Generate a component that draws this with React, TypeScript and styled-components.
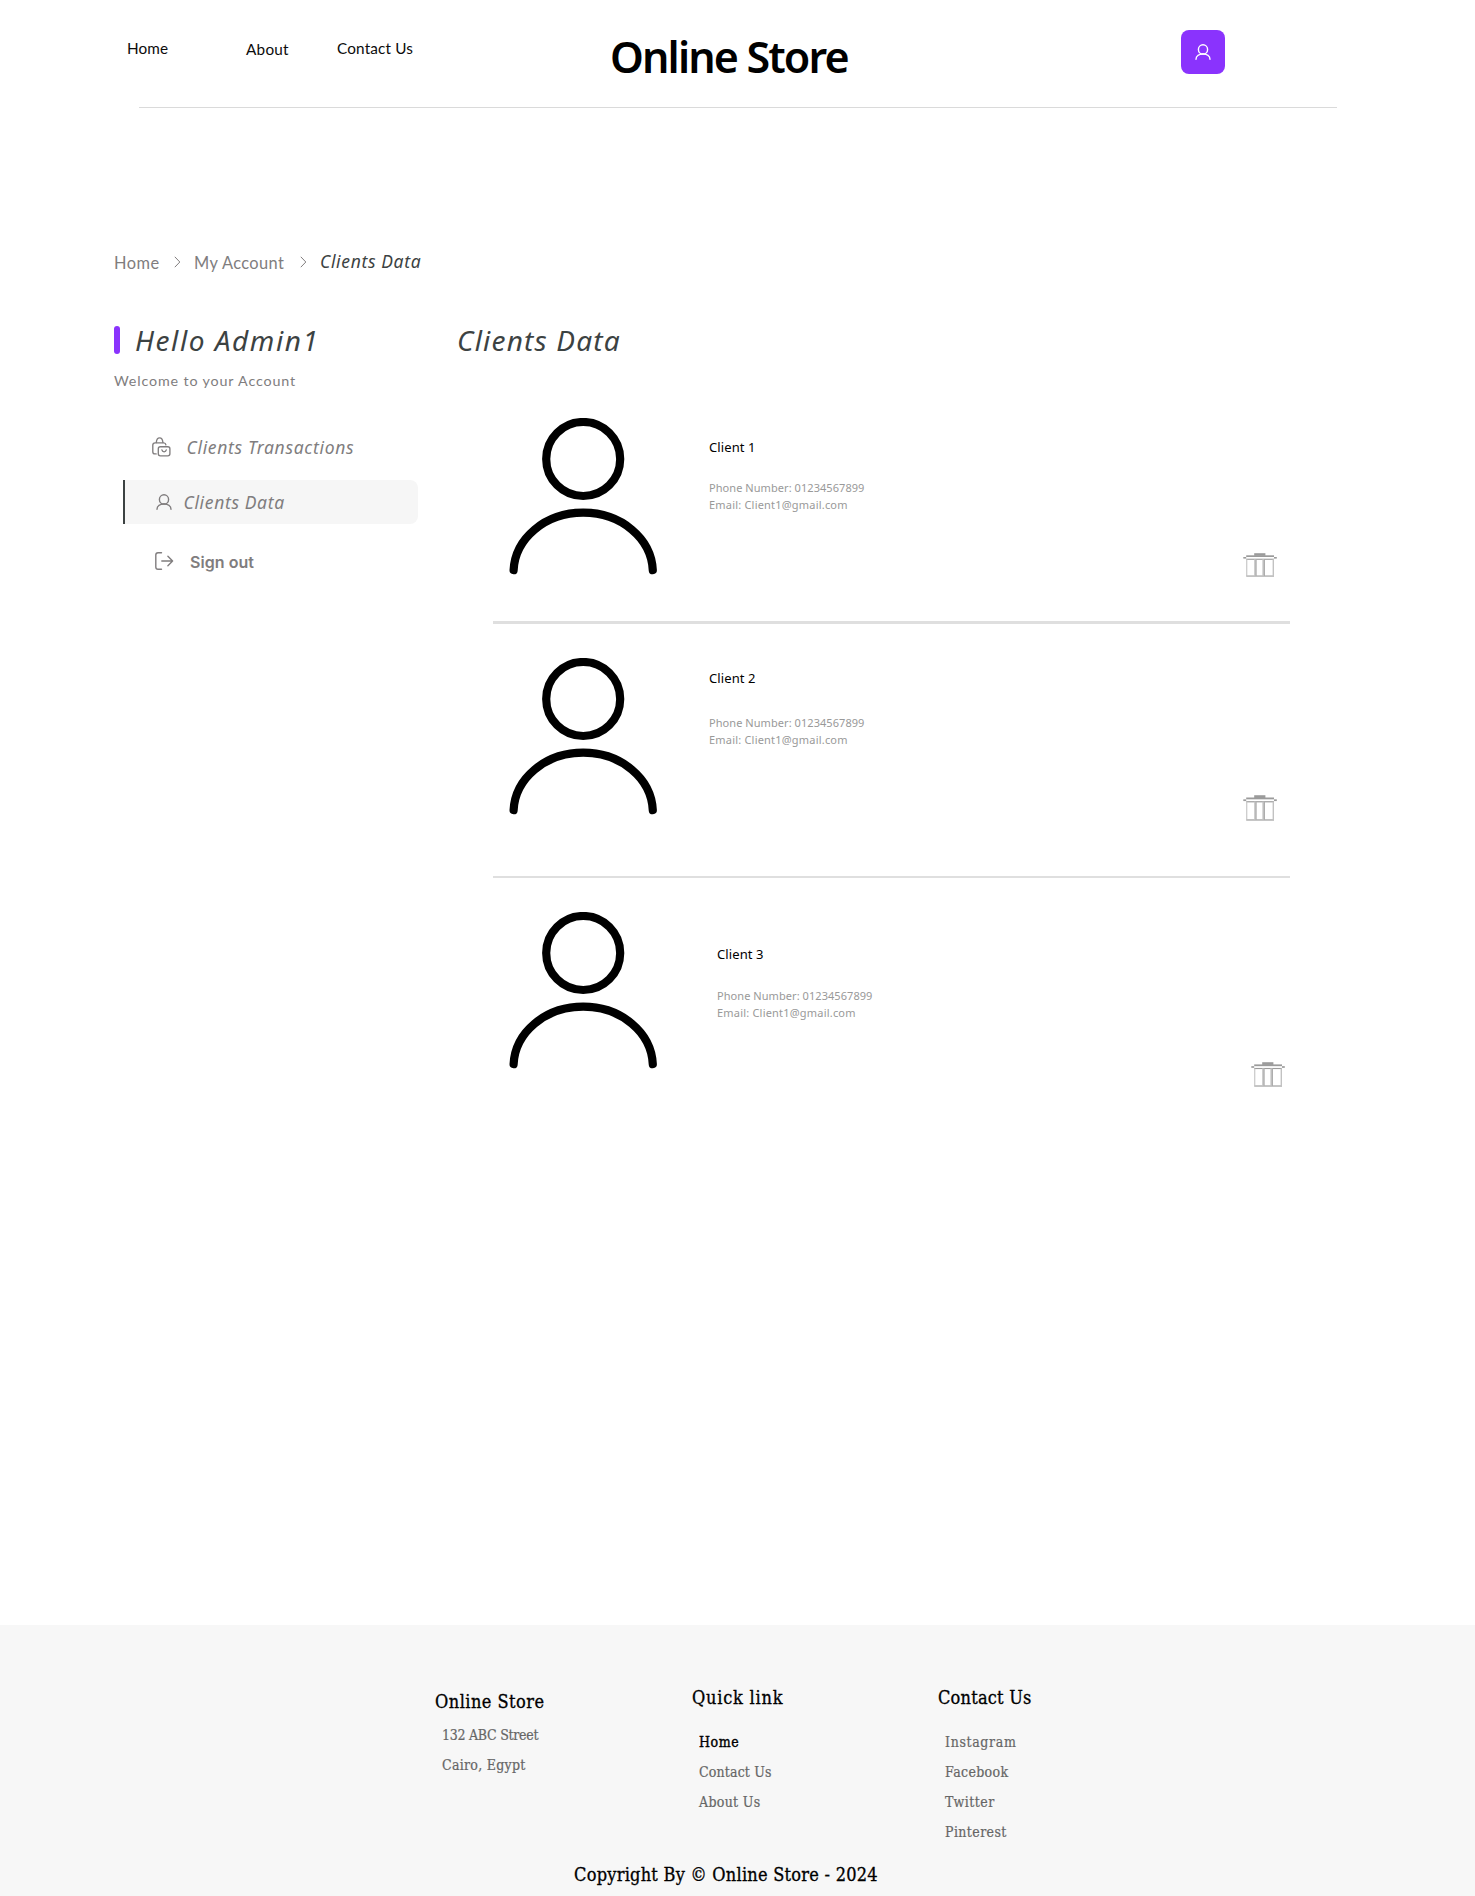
import React from "react";
import styled, { createGlobalStyle } from "styled-components";

const humanist = `"Noto Sans", "Open Sans", sans-serif`;
const lato = `Lato, "Open Sans", sans-serif`;
const serif = `"DejaVu Serif Condensed", "DejaVu Serif", serif`;

const GlobalStyle = createGlobalStyle`
  * { box-sizing: border-box; }
  body { margin: 0; background: #fff; }
  h1, h2, h3, p, ul { margin: 0; padding: 0; font-weight: 400; }
  ul { list-style: none; }
  a { color: inherit; text-decoration: none; }
  svg { display: block; flex: none; }
`;

type Track = { $track?: number };

const Page = styled.div`
  width: 1475px;
  height: 1896px;
  display: flex;
  flex-direction: column;
  overflow: hidden;
`;

/* ---------- header ---------- */

const Header = styled.header`
  flex: none;
  height: 107px;
  display: grid;
  grid-template-columns: 119px 91px 273px 571px 44px;
  align-items: start;
  padding-left: 127px;
`;

const NavLink = styled.a<Track & { $top: number }>`
  margin-top: ${(p) => p.$top}px;
  font: 400 15.3px/20px ${lato};
  letter-spacing: ${(p) => p.$track ?? 0}px;
  color: #0c0c0c;
`;

const Logo = styled.h1`
  margin-top: 27px;
  font: 600 43px/60px ${humanist};
  letter-spacing: -1.85px;
  white-space: nowrap;
  color: #000;
`;

const ProfileButton = styled.button`
  width: 44px;
  height: 44px;
  margin-top: 30px;
  padding: 0;
  border: 0;
  border-radius: 8px;
  background: #8a33fd;
  color: #fff;
  display: flex;
  align-items: center;
  justify-content: center;
`;

const HeaderRule = styled.hr`
  flex: none;
  width: 1198px;
  height: 1px;
  margin: 0 0 0 139px;
  border: 0;
  background: #dadada;
`;

/* ---------- main ---------- */

const Main = styled.main`
  flex: none;
  height: 1517px;
  padding: 141px 0 0 114px;
`;

const Breadcrumbs = styled.nav`
  display: grid;
  grid-template-columns: 60px 20px 106px 20px auto;
  height: 24px;
  color: #807d7e;
`;

const Crumb = styled.a<Track>`
  padding-top: 2px;
  font: 400 16.4px/24px ${lato};
  letter-spacing: ${(p) => p.$track ?? 0}px;
`;

const CurrentCrumb = styled.span`
  font: italic 400 17.5px/24px ${humanist};
  letter-spacing: 0.65px;
  color: #3c4242;
`;

const CrumbArrow = styled.svg`
  width: 7px;
  height: 12px;
  margin-top: 7px;
`;

const Columns = styled.div`
  display: grid;
  grid-template-columns: 343px 1fr;
  margin-top: 53px;
`;

const Greeting = styled.div`
  display: flex;
  gap: 15px;
  height: 28px;
`;

const Accent = styled.span`
  width: 6px;
  height: 28px;
  border-radius: 3px;
  background: #8a33fd;
`;

const Title = styled.h2<Track>`
  height: 28px;
  font: italic 400 28px/29px ${humanist};
  letter-spacing: ${(p) => p.$track ?? 0}px;
  white-space: nowrap;
  color: #3c4242;
`;

const Welcome = styled.p`
  margin-top: 17px;
  font: 400 14.3px/20px ${lato};
  letter-spacing: 0.85px;
  color: #807d7e;
`;

const Menu = styled.ul`
  display: flex;
  flex-direction: column;
  margin: 34px 0 0 9px;
`;

const MenuItem = styled.li<{ $active?: boolean; $indent: number; $gap: number; $space?: number }>`
  display: flex;
  align-items: center;
  width: 295px;
  height: 44px;
  margin-top: ${(p) => p.$space ?? 0}px;
  padding-left: ${(p) => p.$indent}px;
  gap: ${(p) => p.$gap}px;
  border-left: 2px solid ${(p) => (p.$active ? "#3c4242" : "transparent")};
  border-radius: 0 8px 8px 0;
  background: ${(p) => (p.$active ? "#f6f6f6" : "transparent")};
  color: #807d7e;
`;

const MenuLabel = styled.a<Track & { $strong?: boolean }>`
  padding-top: ${(p) => (p.$strong ? 2 : 0)}px;
  font: ${(p) => (p.$strong ? `600 16px/22px Inter, sans-serif` : `italic 400 17.5px/24px ${humanist}`)};
  letter-spacing: ${(p) => p.$track ?? 0}px;
`;

/* ---------- client list ---------- */

const ClientList = styled.ul`
  display: flex;
  flex-direction: column;
  width: 797px;
  margin: 46px 0 0 36px;
`;

const ClientRow = styled.li<{ $height: number; $rule: number }>`
  display: grid;
  grid-template-columns: 216px 1fr auto;
  align-items: start;
  height: ${(p) => p.$height}px;
  border-bottom: ${(p) => p.$rule}px solid #dfdfdf;
`;

const Avatar = styled.svg<{ $top: number }>`
  width: 148px;
  height: 157px;
  margin: ${(p) => p.$top}px 0 0 16px;
`;

const ClientInfo = styled.div<{ $top: number; $indent: number }>`
  padding: ${(p) => p.$top}px 0 0 ${(p) => p.$indent}px;
`;

const ClientName = styled.h3`
  font: 400 13px/18px ${humanist};
  letter-spacing: 0.1px;
  color: #000;
`;

const ClientDetails = styled.div<{ $gap: number }>`
  margin-top: ${(p) => p.$gap}px;
  font: 400 11px/17px ${humanist};
  color: #999;
`;

const Detail = styled.p<Track>`
  letter-spacing: ${(p) => p.$track ?? 0}px;
`;

const DeleteButton = styled.button<{ $top: number; $right: number }>`
  padding: 0;
  border: 0;
  background: none;
  margin: ${(p) => p.$top}px ${(p) => p.$right}px 0 0;
`;

/* ---------- footer ---------- */

const Footer = styled.footer`
  flex: none;
  height: 271px;
  padding-top: 61px;
  background: #f7f7f7;
  font-family: ${serif};
`;

const FooterColumns = styled.div`
  display: grid;
  grid-template-columns: 257px 246px auto;
  height: 161px;
  padding-left: 435px;
`;

const FooterColumn = styled.section<{ $top?: number }>`
  padding-top: ${(p) => p.$top ?? 0}px;
`;

const FooterTitle = styled.h3<Track>`
  font: 400 18px/24px ${serif};
  letter-spacing: ${(p) => p.$track ?? 0}px;
  -webkit-text-stroke: 0.3px currentColor;
  color: #000;
`;

const FooterList = styled.ul<{ $gap: number }>`
  margin: ${(p) => p.$gap}px 0 0 7px;
`;

const FooterItem = styled.li<Track & { $current?: boolean }>`
  font: 400 14px/30px ${serif};
  letter-spacing: ${(p) => p.$track ?? 0}px;
  -webkit-text-stroke: ${(p) => (p.$current ? 0.35 : 0.2)}px currentColor;
  color: ${(p) => (p.$current ? "#000" : "#666")};
`;

const Copyright = styled.p`
  margin: 16px 0 0 574px;
  font: 400 18px/24px ${serif};
  letter-spacing: 0.25px;
  -webkit-text-stroke: 0.3px currentColor;
  color: #000;
`;

/* ---------- icons ---------- */

const UserIcon = () => (
  <svg width="16" height="16" viewBox="0 0 16 16" fill="none" stroke="currentColor" strokeWidth="1.4" strokeLinecap="round">
    <circle cx="8" cy="5.4" r="4.6" />
    <path d="M1 15.2C1 12 4.1 10 8 10s7 2 7 5.2" />
  </svg>
);

const BagIcon = () => (
  <svg width="19" height="20" viewBox="0 0 19 20" fill="none" stroke="currentColor" strokeWidth="1.35" strokeLinecap="round" strokeLinejoin="round">
    <path d="M4.2 16.9H3C1.5 16.9 .8 16 .8 14.7V8.1C.8 6.7 1.7 5.8 3.1 5.8h8.6c1.4 0 2 .7 2.2 2" />
    <path d="M4.3 5.5C4.5 3 5.6.8 7.6.8s3.1 2.2 3.3 4.7" />
    <rect x="6.3" y="9.7" width="11.6" height="9.2" rx="2.1" />
    <path d="M9.9 12.9c.3 1.3 1.1 1.9 2.2 1.9s1.9-.6 2.2-1.9" />
  </svg>
);

const SignOutIcon = () => (
  <svg width="19" height="18" viewBox="0 0 19 18" fill="none" stroke="currentColor" strokeWidth="1.4" strokeLinecap="round" strokeLinejoin="round">
    <path d="M6.5.8H3C1.6.8.8 1.6.8 3v12c0 1.4.8 2.2 2.2 2.2h3.5M6.8 9h10.8M12.9 4.3 17.6 9l-4.7 4.7" />
  </svg>
);

const Chevron = () => (
  <CrumbArrow viewBox="0 0 7 12" fill="none" stroke="#807d7e" strokeWidth="1">
    <path d="M.8.8 5.8 6 .8 11.2" />
  </CrumbArrow>
);

const ClientAvatar = ({ top }: { top: number }) => (
  <Avatar $top={top} viewBox="0 0 148 157" fill="none" stroke="#000" strokeWidth="8.2" strokeLinecap="round">
    <circle cx="74.2" cy="41" r="37" />
    <path d="M4.6 152.2C6.1 120.5 36 94.7 74.2 94.7s68.1 25.8 69.6 57.5" />
  </Avatar>
);

const TrashIcon = ({ height }: { height: number }) => (
  <svg width="34" height={height} viewBox="0 0 34 24" preserveAspectRatio="none">
    <g fill="#9b9b9b">
      <rect x="11.2" y=".2" width="11.2" height="2.6" />
      <rect x="3.2" y="2.3" width="27.8" height="1.7" />
      <rect x=".3" y="4" width="2.9" height="1.6" />
      <rect x="31" y="4" width="2.8" height="1.6" />
      <rect x="3.2" y="5.7" width="27.8" height="1.1" />
      <rect x="3.2" y="22.5" width="27.8" height="1.1" />
    </g>
    <g fill="#c2c2c2">
      <rect x="3.2" y="6" width="1.1" height="17" />
      <rect x="11.2" y="6" width="2.3" height="17" />
      <rect x="19.4" y="6" width="2.5" height="17" />
      <rect x="29.6" y="6" width="1.4" height="17" />
    </g>
    <g fill="#a2a2a2">
      <rect x="12.7" y="6" width=".7" height="17" />
      <rect x="20.9" y="6" width=".8" height="17" />
    </g>
  </svg>
);

/* ---------- data ---------- */

const clients = [
  { name: "Client 1", height: 224, rule: 3, avatar: 18, info: 38, indent: 0, gap: 23, trash: 153, trashH: 24, right: 13 },
  { name: "Client 2", height: 254, rule: 2, avatar: 34, info: 45, indent: 0, gap: 27, trash: 171, trashH: 26, right: 13 },
  { name: "Client 3", height: 222, rule: 0, avatar: 34, info: 67, indent: 8, gap: 24, trash: 184, trashH: 25, right: 5 },
];

type FooterEntry = { text: string; track: number; current?: boolean };

const footer: { title: string; track: number; top: number; gap: number; items: FooterEntry[] }[] = [
  {
    title: "Online Store", track: 0.47, top: 4, gap: 6,
    items: [{ text: "132 ABC Street", track: -0.27 }, { text: "Cairo, Egypt", track: 0.28 }],
  },
  {
    title: "Quick link", track: 0.78, top: 0, gap: 17,
    items: [
      { text: "Home", track: 0.6, current: true },
      { text: "Contact Us", track: 0.15 },
      { text: "About Us", track: 0.3 },
    ],
  },
  {
    title: "Contact Us", track: 0.22, top: 0, gap: 17,
    items: [
      { text: "Instagram", track: 0.65 },
      { text: "Facebook", track: 0.35 },
      { text: "Twitter", track: 0.5 },
      { text: "Pinterest", track: 0.4 },
    ],
  },
];

export default function App() {
  return (
    <Page>
      <GlobalStyle />
      <Header>
        <NavLink $top={38} $track={0.1}>Home</NavLink>
        <NavLink $top={39} $track={0.25}>About</NavLink>
        <NavLink $top={38} $track={0.17}>Contact Us</NavLink>
        <Logo>Online Store</Logo>
        <ProfileButton aria-label="Profile"><UserIcon /></ProfileButton>
      </Header>
      <HeaderRule />

      <Main>
        <Breadcrumbs>
          <Crumb $track={0.5}>Home</Crumb>
          <Chevron />
          <Crumb $track={0.4}>My Account</Crumb>
          <Chevron />
          <CurrentCrumb>Clients Data</CurrentCrumb>
        </Breadcrumbs>

        <Columns>
          <aside>
            <Greeting>
              <Accent />
              <Title $track={1.55}>Hello Admin1</Title>
            </Greeting>
            <Welcome>Welcome to your Account</Welcome>
            <Menu>
              <MenuItem $indent={27} $gap={15.5}>
                <BagIcon />
                <MenuLabel $track={0.69}>Clients Transactions</MenuLabel>
              </MenuItem>
              <MenuItem $active $indent={31} $gap={11.5} $space={11}>
                <UserIcon />
                <MenuLabel $track={0.65}>Clients Data</MenuLabel>
              </MenuItem>
              <MenuItem $indent={30} $gap={16} $space={15}>
                <SignOutIcon />
                <MenuLabel $strong $track={0.05}>Sign out</MenuLabel>
              </MenuItem>
            </Menu>
          </aside>

          <section>
            <Title $track={1.2}>Clients Data</Title>
            <ClientList>
              {clients.map((c) => (
                <ClientRow key={c.name} $height={c.height} $rule={c.rule}>
                  <ClientAvatar top={c.avatar} />
                  <ClientInfo $top={c.info} $indent={c.indent}>
                    <ClientName>{c.name}</ClientName>
                    <ClientDetails $gap={c.gap}>
                      <Detail $track={0.06}>Phone Number: 01234567899</Detail>
                      <Detail $track={0.2}>Email: Client1@gmail.com</Detail>
                    </ClientDetails>
                  </ClientInfo>
                  <DeleteButton $top={c.trash} $right={c.right} aria-label="Delete">
                    <TrashIcon height={c.trashH} />
                  </DeleteButton>
                </ClientRow>
              ))}
            </ClientList>
          </section>
        </Columns>
      </Main>

      <Footer>
        <FooterColumns>
          {footer.map((col) => (
            <FooterColumn key={col.title} $top={col.top}>
              <FooterTitle $track={col.track}>{col.title}</FooterTitle>
              <FooterList $gap={col.gap}>
                {col.items.map((item) => (
                  <FooterItem key={item.text} $track={item.track} $current={item.current}>
                    {item.text}
                  </FooterItem>
                ))}
              </FooterList>
            </FooterColumn>
          ))}
        </FooterColumns>
        <Copyright>Copyright By © Online Store - 2024</Copyright>
      </Footer>
    </Page>
  );
}
